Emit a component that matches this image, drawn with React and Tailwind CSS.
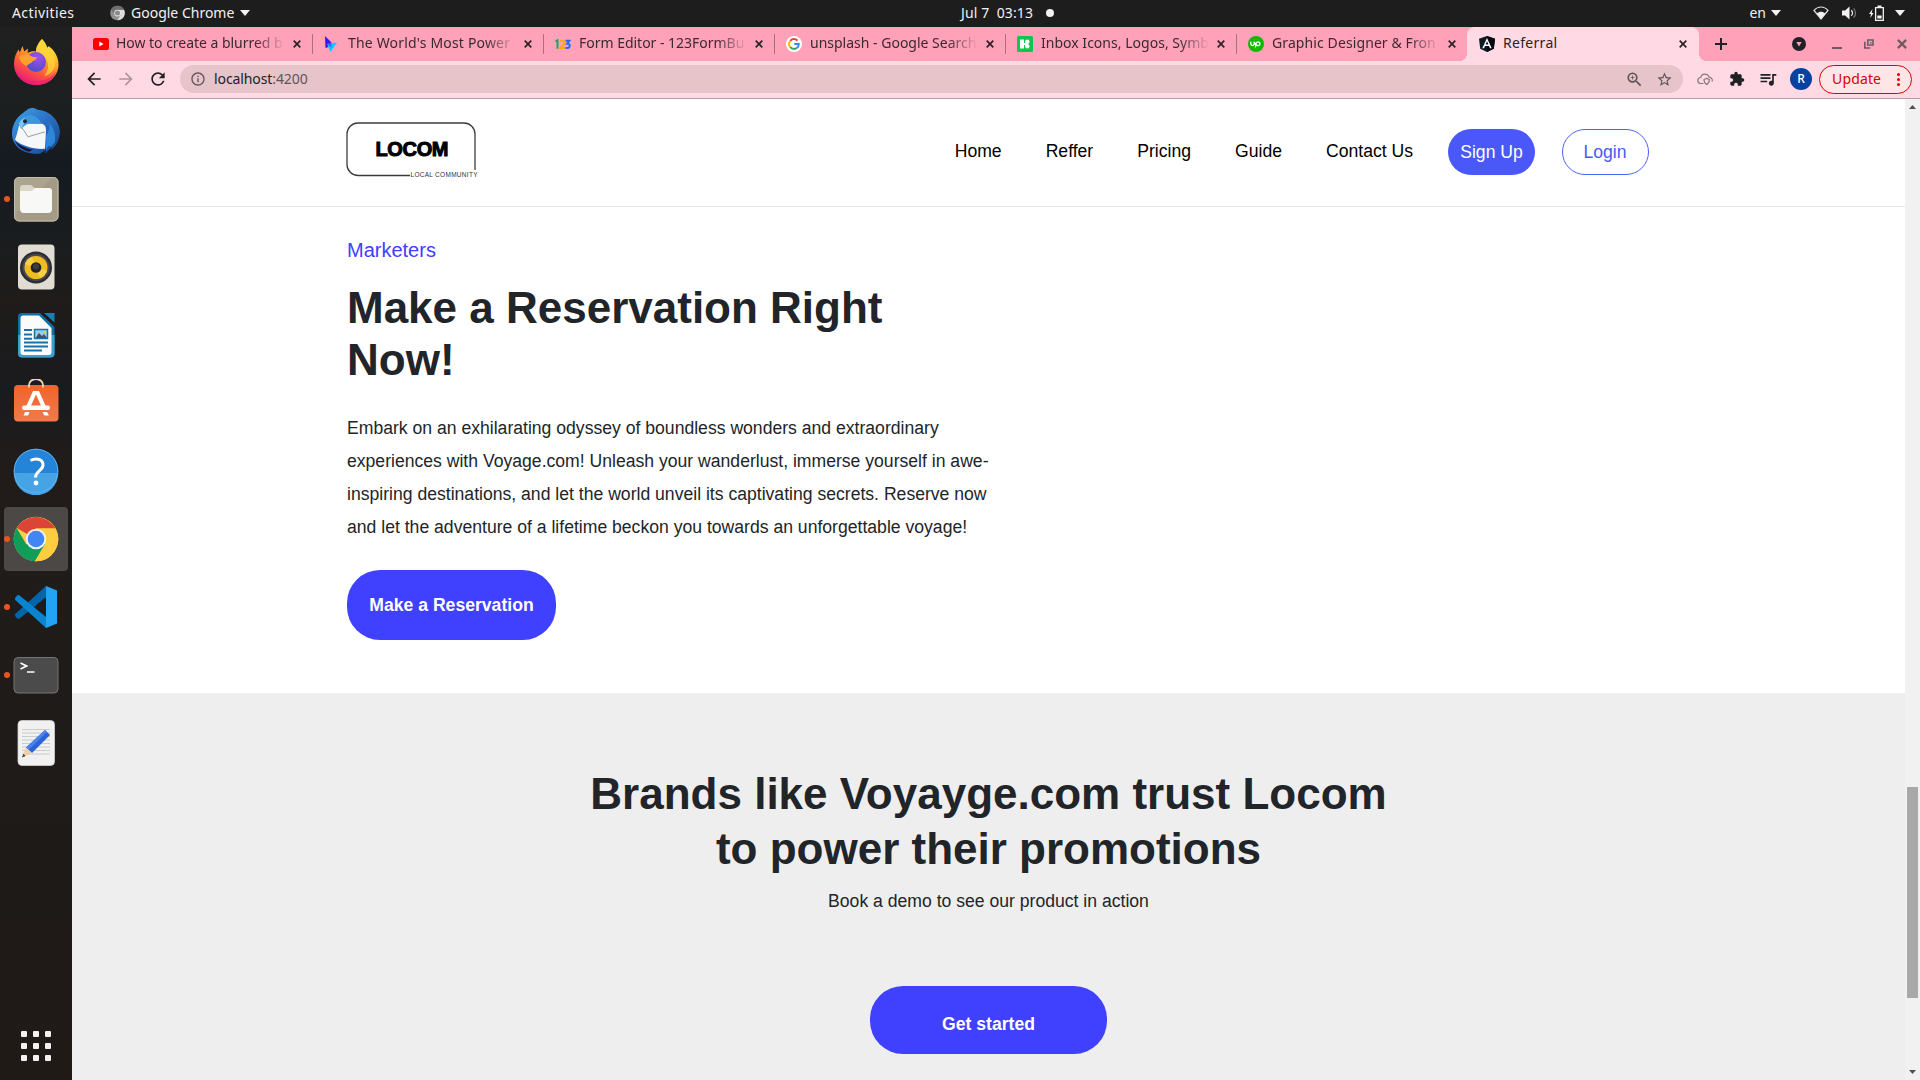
import React from "react";
import {
  MdArrowBack,
  MdArrowForward,
  MdRefresh,
  MdInfoOutline,
  MdZoomIn,
  MdStarBorder,
  MdExtension,
  MdQueueMusic,
} from "react-icons/md";

/* ---------- dock icons ---------- */

const Icon = ({ children }) => (
  <svg viewBox="0 0 48 48" className="size-12">
    {children}
  </svg>
);

const Firefox = () => (
  <Icon>
    <defs>
      <linearGradient id="ffBody" x1="0.8" y1="0" x2="0.25" y2="1">
        <stop offset="0" stopColor="#fff44f" />
        <stop offset="0.35" stopColor="#ffae2c" />
        <stop offset="0.65" stopColor="#ff5a3c" />
        <stop offset="1" stopColor="#e3127f" />
      </linearGradient>
      <radialGradient id="ffGlobe" cx="0.6" cy="0.25" r="0.8">
        <stop offset="0" stopColor="#a24df5" />
        <stop offset="1" stopColor="#4a4fc4" />
      </radialGradient>
    </defs>
    <path
      d="M30 0c3 3 4.500 6 5 9 1-.5 1.500-1.500 1.500-2 6 4 10 11 10 18.500C46.500 37 37 46 24.500 46 12 46 2 37 2 25 2 19 4 14 6.500 10.500l1.300 3L10.500 7l1.800 5.500L16 9.500l-.4 4.500C18 12.500 21 12 24 12.500 24 8 27 3 30 0z"
      fill="url(#ffBody)"
    />
    <path d="M30 0c3 4 5 8 7 10 4 3.500 7 9 6 16-1 6-6 10-11 11 5-5 5-12 2-17-3-5-9-6-10-8C24 8 27 3 30 0z" fill="#ffd83a" opacity="0.75" />
    <circle cx="24" cy="23" r="10" fill="url(#ffGlobe)" />
    <path d="M7 18c3-3 9-3 12-1 2 1.200 4 1 6 1.500-1 3-4 3-5 4.500-1.500 2-4 1.500-5 4-3-1-7-4-8-9z" fill="#ffa22d" />
    <path d="M4 31c4 8 12 11 20 11s16-3 20-10c-2 9-10 14-20 14S6 40 4 31z" fill="#ef1c73" opacity="0.7" />
  </Icon>
);

const Thunderbird = () => (
  <Icon>
    <defs>
      <linearGradient id="tbBody" x1="0" y1="0" x2="1" y2="1">
        <stop offset="0" stopColor="#3fa2e5" />
        <stop offset="0.5" stopColor="#2a6fc4" />
        <stop offset="1" stopColor="#173f86" />
      </linearGradient>
    </defs>
    <g transform="translate(0 0.8)">
      <path
        d="M20 0c3 0 4 1.500 6 2 12 1 21 10 22 22-1 8-3 14-9 18l1-3-7 7 1-4-6 4C12 47 0 39 0 26 0 18 4 10 10 6c3-2 5-5 10-6z"
        fill="url(#tbBody)"
      />
      <path d="M5 26l2-8 6-2h17c3 1 4 3 4 7l-1 18c-10 1-24-3-30-9z" fill="#f6f7f9" />
      <path d="M8 17l8 12 17-5" fill="none" stroke="#8f939b" strokeWidth="0.9" />
      <path d="M3 33c5 5 12 8 18 9l-4 2C10 42 5 38 3 33z" fill="#1b1436" />
      <path d="M7 16c1-6 7-10 14-8 4 1 8 5 8 8-6-2-12-1-15 1l-5 4z" fill="#3d97dd" />
      <path d="M7 16c1-3 3-5 6-6-1 4 0 6-4 11z" fill="#7cc6f0" />
      <circle cx="13" cy="13.500" r="2" fill="#1c2a44" />
      <path d="M34 28c3-4 4-8 3-13 4 4 7 11 6 19l-4 5-2-1-3 4z" fill="#2c86da" />
    </g>
  </Icon>
);

const Files = () => (
  <Icon>
    <rect x="2" y="2" width="44.500" height="44.500" rx="5" fill="#a39b86" />
    <path d="M2 7a5 5 0 0 1 5-5h34L2 40z" fill="#b3ab98" opacity="0.55" />
    <rect x="2.500" y="2.500" width="43.500" height="43.500" rx="4.600" fill="none" stroke="#c3bcaa" />
    <path d="M8 13a3 3 0 0 1 3-3h8l4 3.500V20H8z" fill="#dcd7c9" />
    <path d="M8 16h12l3-3h14a3 3 0 0 1 3 3v18a4 4 0 0 1-4 4H12a4 4 0 0 1-4-4z" fill="#f8f8f6" />
  </Icon>
);

const Rhythmbox = () => (
  <Icon>
    <rect x="6" y="1.500" width="36.500" height="45" rx="4" fill="#e2ddd3" />
    <circle cx="24" cy="24.500" r="16" fill="#2d2d35" />
    <circle cx="24" cy="24.500" r="13.500" fill="#4a4a50" />
    <circle cx="24" cy="24.500" r="11.500" fill="#f0bd21" />
    <path d="M24 24.500L13 21a11.500 11.500 0 0 1 7-7.300zM24 24.500L35 28a11.500 11.500 0 0 1-7 7.300z" fill="#ffdc63" opacity="0.6" />
    <circle cx="24" cy="24.500" r="5.300" fill="#232326" />
    <circle cx="24" cy="23.500" r="3" fill="#3d3d42" />
  </Icon>
);

const Writer = () => (
  <Icon>
    <path d="M10 2h18l14.500 14v26.500a4 4 0 0 1-4 4H10a4 4 0 0 1-4-4V6a4 4 0 0 1 4-4z" fill="#0f6ea6" />
    <path d="M6 24h36.500v18.500a4 4 0 0 1-4 4H10a4 4 0 0 1-4-4z" fill="#3b9fd2" />
    <path d="M11 4.500h16L39.500 17v24a3 3 0 0 1-3 3H11.500a3 3 0 0 1-3-3V7a2.500 2.500 0 0 1 2.500-2.500z" fill="#fbfbfb" />
    <path d="M32 2h10.500v9.500z" fill="#1a7db5" />
    <path d="M12 19h8M12 23.500h8M12 27.700h8M12 31.500h24M12 35.500h24M12 39.500h18" stroke="#1672a8" strokeWidth="2" />
    <rect x="22.500" y="18.500" width="13" height="9" fill="#8fd0f2" stroke="#1672a8" strokeWidth="1.500" />
    <path d="M23.500 27l3.500-5 3 3 2-2 3 4z" fill="#45525c" />
    <circle cx="33" cy="21" r="1.300" fill="#f3c53a" />
  </Icon>
);

const Software = () => (
  <Icon>
    <defs>
      <linearGradient id="swBag" x1="0" y1="0" x2="0" y2="1">
        <stop offset="0" stopColor="#f0632b" />
        <stop offset="1" stopColor="#f17a4c" />
      </linearGradient>
    </defs>
    <rect x="2" y="6" width="44.500" height="36.500" rx="4" fill="url(#swBag)" />
    <path d="M17 8.500V6a7 6 0 0 1 14 0v2.500" fill="none" stroke="#f2d5a5" strokeWidth="1.800" />
    <path d="M21 12h6l8 18h-4.500L24 15.500 17.500 30H13z" fill="#fff" />
    <rect x="10" y="26.500" width="28" height="4.500" rx="2.200" fill="#fff" />
    <path d="M13 33h4.500l-1.500 3.500h-4.500zM30.500 33H35l2 3.500h-4.500z" fill="#fff" />
  </Icon>
);

const Help = () => (
  <Icon>
    <circle cx="24" cy="24" r="22.300" fill="#2484d8" />
    <path d="M1.700 26h44.600A22.300 22.300 0 0 1 1.700 26z" fill="#45a3e6" />
    <circle cx="24" cy="24" r="21.800" fill="none" stroke="#62b3ec" strokeWidth="0.900" />
    <path d="M18.500 13.500c7-3.500 13-.5 12.500 5-.4 5-7.500 5.500-7.500 12" fill="none" stroke="#fff" strokeWidth="3" />
    <circle cx="24" cy="36" r="2.400" fill="#fff" />
  </Icon>
);

const Chrome = () => (
  <Icon>
    <circle cx="24" cy="24" r="22.300" fill="#ffcd40" />
    <path d="M24 24L4.700 12.900A22.300 22.300 0 0 1 43.300 13.500H24z" fill="#db4437" />
    <path d="M24 24l9 5.200L22.900 46.300A22.300 22.300 0 0 1 4.700 12.900l9.700 16.600z" fill="#0f9d58" />
    <path d="M24 13.500h19.500a22.300 22.300 0 0 1-20.600 32.800L33.100 29.200z" fill="#ffcd40" />
    <circle cx="24" cy="24" r="10.300" fill="#f1f1f1" />
    <circle cx="24" cy="24" r="8.300" fill="#4285f4" />
  </Icon>
);

const VSCode = () => (
  <Icon>
    <path d="M3.500 33.500c-.8-.8-.7-2 0-2.700L34 3l2 9.500L7.500 35.500c-.8.600-1.800.500-2.400 0z" fill="#0065a9" />
    <path d="M3.500 14.500c-.8.800-.7 2 0 2.700L34 45l2-9.500L7.500 12.500c-.8-.6-1.800-.5-2.400 0z" fill="#0a84cf" />
    <path d="M34 3l11 4.500v33L34 45z" fill="#23a3f3" />
  </Icon>
);

const Terminal = () => (
  <Icon>
    <rect x="2" y="6.500" width="44" height="35.500" rx="4" fill="#4b4b4b" stroke="#747474" />
    <path d="M8.500 12l6 3-6 3" fill="none" stroke="#fff" strokeWidth="1.800" />
    <path d="M15 21h7.500" stroke="#fff" strokeWidth="1.500" />
  </Icon>
);

const TextEditor = () => (
  <Icon>
    <rect x="6" y="1.500" width="36.500" height="45" rx="4" fill="#f1f1f1" stroke="#d2d2d2" strokeWidth="0.800" />
    <path d="M10 10.500h28M10 14h28M10 17.500h28M10 21h28M10 24.500h28M10 28h28M10 31.500h28M10 35h28" stroke="#c2c2c2" strokeWidth="0.800" />
    <path d="M33 11l5 5-18 18-6-5.500z" fill="#2b62d6" />
    <path d="M33 11l2 2-18.500 18-2.500-2.500z" fill="#4a82ee" />
    <path d="M14 28.500l6 5.500-10 4.500z" fill="#f0cfa8" />
    <path d="M11.500 34.800l2 2.200-3.500 1.500z" fill="#3a3a3a" />
  </Icon>
);

const dock = [
  { C: Firefox },
  { C: Thunderbird },
  { C: Files, run: true },
  { C: Rhythmbox },
  { C: Writer },
  { C: Software },
  { C: Help },
  { C: Chrome, run: true, active: true },
  { C: VSCode, run: true },
  { C: Terminal, run: true },
  { C: TextEditor },
];

const Dock = () => (
  <aside className="flex w-[72px] shrink-0 flex-col bg-[linear-gradient(to_bottom,#1f201f_0%,#1c1f20_9%,#141a20_13%,#1a1d1f_20%,#1f1c1a_26%,#1a1b1f_35%,#211c19_42%,#1e1b19_70%,#201a17_100%)] pt-0.5">
    {dock.map(({ C, run, active }, i) => (
      <div key={i} className="flex h-[68px] items-center pl-1">
        <div
          className={
            active
              ? "flex h-16 w-16 items-center rounded bg-[#4c4845]"
              : "flex h-16 w-16 items-center"
          }
        >
          <span className={run ? "-mr-1.5 size-1.5 rounded-full bg-[#e95420]" : "-mr-1.5 size-1.5"} />
          <span className="ml-2">
            <C />
          </span>
        </div>
      </div>
    ))}
    <div className="mt-auto mb-[19px] ml-[21px] grid w-[30px] grid-cols-3 gap-1.5">
      {Array.from({ length: 9 }, (_, i) => (
        <span key={i} className="size-1.5 rounded-[1px] bg-[#f3f2f0]" />
      ))}
    </div>
  </aside>
);

/* ---------- system bar ---------- */

const Caret = () => (
  <svg viewBox="0 0 10 6" className="h-[6px] w-[10px]">
    <path d="M0 0h10L5 6z" fill="#f2f2f2" />
  </svg>
);

const TopBar = () => (
  <header className="flex h-[27px] shrink-0 items-center bg-[#1d1d1d] pb-px text-[14px] leading-none text-[#f2f2f2]">
    <div className="flex flex-1 items-center">
      <span className="ml-3 w-[98px] tracking-[0.4px]">Activities</span>
      <svg viewBox="0 0 16 16" className="h-4 w-[15px]">
        <circle cx="8" cy="8" r="7.800" fill="#8f8f8f" />
        <path d="M8 4.500h6.900A7.800 7.800 0 0 1 8 15.800L11.300 10z" fill="#dcdcdc" />
        <path d="M8 4.500h6.900A7.800 7.800 0 0 0 1.300 4L5 10z" fill="#6f6f6f" />
        <circle cx="8" cy="8" r="3.600" fill="#e6e6e6" />
        <circle cx="8" cy="8" r="2.700" fill="#8a8a8a" />
      </svg>
      <span className="mr-1.5 ml-[6px]">Google Chrome</span>
      <Caret />
    </div>
    <div className="flex items-center gap-[13px] pl-[110px]">
      <span className="whitespace-pre tracking-[0.1px]">Jul 7  03:13</span>
      <span className="size-2 rounded-full bg-[#f2f2f2]" />
    </div>
    <div className="flex flex-1 items-center justify-end pr-[15px]">
      <span className="mr-[5px]">en</span>
      <Caret />
      <svg viewBox="0 0 16 14" className="mr-[13px] ml-8 h-[14px] w-4">
        <path d="M1 4.500C5-.2 11-.2 15 4.500L8 13z" fill="none" stroke="#e4e4e4" strokeWidth="1.200" />
        <path d="M3.800 7.500c2.500-2.300 5.900-2.300 8.400 0L8 12.800z" fill="#f2f2f2" />
      </svg>
      <svg viewBox="0 0 15 14" className="mr-3 h-[14px] w-[15px]">
        <path d="M0 4.500h3.200L7.500.5v13L3.200 9.500H0z" fill="#f2f2f2" />
        <path d="M9.300 4.300c1.500 1.600 1.500 3.800 0 5.400" fill="none" stroke="#e0e0e0" strokeWidth="1.300" />
        <path d="M11.600 2.300c2.600 2.700 2.600 6.700 0 9.400" fill="none" stroke="#777" strokeWidth="1.200" />
      </svg>
      <svg viewBox="0 0 15 16" className="mr-[11px] h-4 w-[15px]">
        <path d="M3.500 4L0 9h2L1.300 13 4.500 8H2.700z" fill="#f2f2f2" />
        <path d="M6.600 2.700h7.700v12.600H6.600z" fill="none" stroke="#f2f2f2" strokeWidth="1.300" />
        <path d="M8.500 0.500h4v2h-4zM8.300 10.500h4.300v3H8.300z" fill="#f2f2f2" />
      </svg>
      <Caret />
    </div>
  </header>
);

/* ---------- browser tabs ---------- */

const Fav = ({ children }) => (
  <svg viewBox="0 0 16 16" className="size-4 shrink-0">
    {children}
  </svg>
);

const YouTube = () => (
  <Fav>
    <rect y="2" width="16" height="12" rx="2.600" fill="#f00" />
    <path d="M6.300 5.600v4.800L10.500 8z" fill="#fff" />
  </Fav>
);
const Powtoon = () => (
  <Fav>
    <path d="M1 0l6.500 6.500L4.500 11 1.500 12z" fill="#3a12f0" />
    <path d="M3 8l10-1.500L6.500 16z" fill="#12c8ff" />
    <path d="M3 8l4.500-1.500 0 5z" fill="#2a6bff" />
  </Fav>
);
const OneTwoThree = () => (
  <Fav>
    <path d="M0.500 5.500l2-1.200v8.500" fill="none" stroke="#16a765" strokeWidth="2" />
    <path d="M5 5h3.500c1.500 0 1.500 3 0 3.700L5.500 12H10" fill="none" stroke="#ffab00" strokeWidth="2.100" />
    <path d="M10.500 4.700h4l-2.200 3c3.500 0 3 4.300-.3 4.300h-1.500" fill="none" stroke="#1c6cf0" strokeWidth="2" />
  </Fav>
);
const Google = () => (
  <Fav>
    <circle cx="8" cy="8" r="8" fill="#fff" />
    <path d="M4.300 4.800A4.800 4.800 0 0 1 11.500 4.700" fill="none" stroke="#ea4335" strokeWidth="2" />
    <path d="M4.300 4.800a4.900 4.900 0 0 0 0 6.400" fill="none" stroke="#fbbc05" strokeWidth="2" />
    <path d="M4.300 11.200a4.800 4.800 0 0 0 6.800.5" fill="none" stroke="#34a853" strokeWidth="2" />
    <path d="M8.200 8h4.600c0 1.600-.6 2.800-1.700 3.700" fill="none" stroke="#4285f4" strokeWidth="2" />
  </Fav>
);
const IconsEight = () => (
  <Fav>
    <rect width="16" height="16" rx="1.500" fill="#12c54c" />
    <rect x="3" y="3.500" width="4" height="9" fill="#fff" />
    <circle cx="10.300" cy="5.700" r="2.200" fill="#fff" />
    <circle cx="10.300" cy="10.300" r="2.200" fill="#fff" />
    <path d="M8.200 5.700h2.600v4.600H8.200zM7 7h2v2H7z" fill="#fff" />
  </Fav>
);
const Upwork = () => (
  <Fav>
    <circle cx="8" cy="8" r="8" fill="#14b800" />
    <path
      d="M2.800 5.800v2c0 2.300 3.400 2.300 3.400 0v-2c.7 2 1.800 3.800 3.600 3.800 2.700 0 2.700-3.800.2-3.800-1.200 0-1.800.8-2 2l-.6 3.700"
      fill="none"
      stroke="#fff"
      strokeWidth="1.300"
    />
  </Fav>
);
const Angular = () => (
  <Fav>
    <path d="M8 0l8 2.700-1.200 10L8 16l-6.800-3.300L0 2.700z" fill="#0f1a24" />
    <path d="M8 0l8 2.700-1.200 10L8 16z" fill="#05090d" />
    <path d="M8 2L3.300 12.300H5l1-2.300h4l1 2.300h1.700zm0 3.300L9.400 8.600H6.600z" fill="#fff" />
  </Fav>
);

const Close = ({ className }) => (
  <svg viewBox="0 0 8 8" className={className}>
    <path d="M0.700 0.700l6.600 6.600M7.300 0.700L0.700 7.300" stroke="currentColor" strokeWidth="1.700" />
  </svg>
);

const tabs = [
  { F: YouTube, t: "How to create a blurred b", k: "-ml-px tracking-[-0.03px]" },
  { F: Powtoon, t: "The World's Most Power", k: "tracking-[0.18px]" },
  { F: OneTwoThree, t: "Form Editor - 123FormBu", k: "tracking-[-0.02px]" },
  { F: Google, t: "unsplash - Google Search", k: "tracking-[0px]" },
  { F: IconsEight, t: "Inbox Icons, Logos, Symb", k: "tracking-[0.02px]" },
  { F: Upwork, t: "Graphic Designer & Fron", k: "tracking-[0.1px]" },
];

const TabStrip = () => (
  <div className="flex h-[34px] shrink-0 items-stretch bg-[#ffa1b9] pl-[9px] text-[14px] leading-5 text-[#3a2a2f]">
    {tabs.map(({ F, t, k }, i) => (
      <div key={t} className="flex w-[231px] shrink-0 items-center pl-3">
        <F />
        <div className="ml-2 w-[168px] pb-0.5 whitespace-nowrap [mask-image:linear-gradient(to_right,black_82%,transparent_100%)]">
          <span className={k}>{t}</span>
        </div>
        <Close className="ml-2 size-2 shrink-0 text-[#2a2226]" />
        <span className={i < 5 ? "-mr-px ml-auto h-5 w-px bg-[#a8707f]" : "hidden"} />
      </div>
    ))}
    <div className="relative flex w-[232px] shrink-0 items-center rounded-t-lg bg-[#ffdae4] pl-3 text-[#2b2226]">
      <span className="absolute bottom-0 -left-2 size-2 bg-[radial-gradient(circle_at_0_0,transparent_8px,#ffdae4_8px)]" />
      <span className="absolute -right-2 bottom-0 size-2 bg-[radial-gradient(circle_at_100%_0,transparent_8px,#ffdae4_8px)]" />
      <Angular />
      <span className="ml-2 w-[168px] pb-0.5 tracking-[0.3px]">Referral</span>
      <Close className="ml-2 size-2" />
    </div>
    <div className="flex flex-1 items-center text-[#202124]">
      <svg viewBox="0 0 12 12" className="ml-4 size-3">
        <path d="M6 0v12M0 6h12" stroke="currentColor" strokeWidth="2" />
      </svg>
      <svg viewBox="0 0 14 14" className="ml-[65px] size-[14px]">
        <circle cx="7" cy="7" r="7" fill="#202124" />
        <path d="M4.300 5h5.400L7 9.500z" fill="#ffa1b9" />
      </svg>
      <span className="mt-2 ml-[26px] h-0.5 w-[10px] bg-[#6e5a62]" />
      <svg viewBox="0 0 10 10" className="ml-[22px] size-[10px] text-[#6e5a62]">
        <path d="M3.800 1h5.200v5H3.800zM0.800 2.800v6.200h5.400" fill="none" stroke="currentColor" strokeWidth="1.600" />
        <path d="M6 3h1.500v1.500H6z" fill="currentColor" />
      </svg>
      <Close className="ml-[23px] size-[10px] text-[#6e5a62]" />
    </div>
  </div>
);

const Toolbar = () => (
  <div className="flex h-[38px] shrink-0 items-center border-b border-[#b79aa4] bg-[#ffdae4] pb-px text-[14px] leading-5 text-[#202124]">
    <MdArrowBack className="ml-3 size-5" />
    <MdArrowForward className="ml-3 size-5 text-[#b0949d]" />
    <MdRefresh className="ml-3 size-5" />
    <div className="ml-3 flex h-7 w-[1503px] items-center rounded-full bg-[#e6c4ca] text-[#5f5559]">
      <MdInfoOutline className="ml-[10px] size-4" />
      <span className="ml-2 pb-px tracking-[-0.1px]">
        <span className="text-[#202124]">localhost</span>:4200
      </span>
      <MdZoomIn className="mr-3 ml-auto size-[19px]" />
      <MdStarBorder className="mr-[10px] size-[17px]" />
    </div>
    <svg viewBox="0 0 16 12" className="ml-[14px] h-3 w-4">
      <path d="M6.500 10.500H4a3 3 0 0 1-.3-6C4.500 0 11 0 12 4.200c2.500.2 3.800 2.300 3 4.300" fill="none" stroke="#8d7780" strokeWidth="1.200" />
      <path d="M7 6.500l2.700-1 2.700 1c0 2.500-.7 4-2.700 5-2-1-2.700-2.500-2.700-5z" fill="none" stroke="#8d7780" strokeWidth="1.200" />
    </svg>
    <MdExtension className="ml-4 size-4" />
    <MdQueueMusic className="ml-[13px] size-5" />
    <span className="ml-3 flex size-[22px] items-center justify-center rounded-full bg-[#0842a0] text-[12px] leading-none font-medium text-white">R</span>
    <span className="ml-[7px] flex h-[29px] w-[93px] items-center rounded-full border border-[#dc0000] bg-[#ffe6e6] pl-3 text-[14px] tracking-[0.15px] text-[#dc0000]">
      Update
      <span className="mr-[11px] ml-auto flex flex-col gap-0.5">
        <i className="size-[3px] rounded-full bg-[#dc0000]" />
        <i className="size-[3px] rounded-full bg-[#dc0000]" />
        <i className="size-[3px] rounded-full bg-[#dc0000]" />
      </span>
    </span>
  </div>
);

/* ---------- page ---------- */

const Logo = () => (
  <svg viewBox="0 0 134 58" className="h-[58px] w-[134px]">
    <path d="M64 53.500H12A11 11 0 0 1 1 42.500V12A11 11 0 0 1 12 1h106a11 11 0 0 1 11 11v36" fill="none" stroke="#3c3c3c" strokeWidth="1.300" />
    <text x="29.500" y="34" textLength="73" lengthAdjust="spacing" className="[font-family:'Liberation_Sans'] text-[20px] font-bold" stroke="#000" strokeWidth="1">
      LOCOM
    </text>
    <text x="64.500" y="55.300" textLength="67" className="[font-family:'Liberation_Sans'] text-[6.5px]" fill="#333">
      LOCAL COMMUNITY
    </text>
  </svg>
);

const Page = () => (
  <main className="flex min-w-0 flex-1 flex-col bg-white [font-family:'Liberation_Sans',Arial,sans-serif] text-[17.6px] text-[#212529]">
    <nav className="h-[108px] shrink-0 border-b border-[#e6e6e6]">
      <div className="mx-auto flex h-full w-[1320px] pl-[17px]">
        <div className="pt-[23px]">
          <Logo />
        </div>
        <div className="ml-auto flex items-start text-black">
          <div className="flex gap-11 pt-10 leading-6">
            <span>Home</span>
            <span>Reffer</span>
            <span>Pricing</span>
            <span>Guide</span>
            <span>Contact Us</span>
          </div>
          <span className="mt-[30px] ml-[34.5px] flex h-[46px] w-[87px] items-center justify-center rounded-full bg-[#4a58f9] pl-px whitespace-nowrap text-white">
            Sign Up
          </span>
          <span className="mt-[30px] ml-[27px] flex h-[46px] w-[87px] items-center justify-center rounded-full border border-[#4a62f6] text-[#4a58f9]">
            Login
          </span>
        </div>
      </div>
    </nav>

    <section className="mx-auto h-[486px] w-[1320px] shrink-0 pl-[18.5px]">
      <p className="pt-7 text-[20px] leading-[30px] text-[#4040ff]">Marketers</p>
      <h1 className="mt-[17px] w-[648px] text-[44px] leading-[52px] font-bold">
        Make a Reservation Right
        <br />
        Now!
      </h1>
      <p className="mt-[25.6px] whitespace-nowrap leading-[33px]">
        Embark on an exhilarating odyssey of boundless wonders and extraordinary
        <br />
        experiences with Voyage.com! Unleash your wanderlust, immerse yourself in awe-
        <br />
        inspiring destinations, and let the world unveil its captivating secrets. Reserve now
        <br />
        and let the adventure of a lifetime beckon you towards an unforgettable voyage!
      </p>
      <button className="mt-[26px] flex h-[70px] w-[209px] items-center justify-center rounded-[33px] bg-[#4040ff] pt-0.5 font-bold text-white">
        Make a Reservation
      </button>
    </section>

    <section className="flex flex-1 flex-col items-center bg-[#eeeeee] text-center">
      <h2 className="mt-[73px] text-[44px] leading-[55px] font-bold">
        Brands like Voyayge.com trust Locom
        <br />
        to power their promotions
      </h2>
      <p className="mt-3 leading-[26px]">Book a demo to see our product in action</p>
      <button className="mt-[72px] flex h-[68px] w-[237px] items-center justify-center rounded-[33px] bg-[#4040ff] pt-2 font-bold text-white">
        Get started
      </button>
    </section>
  </main>
);

const Scrollbar = () => (
  <div className="flex w-[15px] shrink-0 flex-col items-center bg-[#f1f1f1]">
    <svg viewBox="0 0 7 4" className="mt-[6px] h-1 w-[7px]">
      <path d="M3.500 0L7 4H0z" fill="#505050" />
    </svg>
    <span className="mt-[678px] h-[211px] w-[11px] bg-[#a8a8a8]" />
    <svg viewBox="0 0 7 4" className="mt-auto mb-[6px] h-1 w-[7px]">
      <path d="M3.500 4L7 0H0z" fill="#505050" />
    </svg>
  </div>
);

export default function App() {
  return (
    <div className="flex h-[1080px] w-[1920px] flex-col overflow-hidden bg-white [font-family:'Noto_Sans',sans-serif]">
      <TopBar />
      <div className="flex min-h-0 flex-1">
        <Dock />
        <div className="flex min-w-0 flex-1 flex-col">
          <TabStrip />
          <Toolbar />
          <div className="flex min-h-0 flex-1">
            <Page />
            <Scrollbar />
          </div>
        </div>
      </div>
    </div>
  );
}
